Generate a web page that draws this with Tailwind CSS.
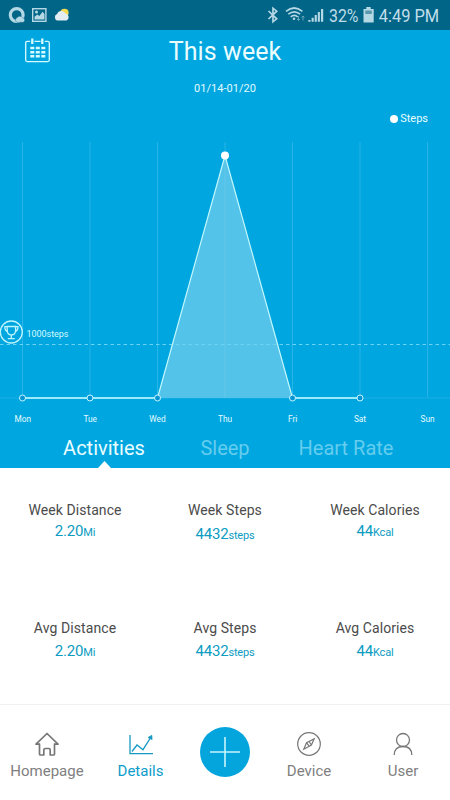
<!DOCTYPE html>
<html lang="en">
<head>
<meta charset="utf-8">
<meta name="viewport" content="width=device-width, initial-scale=1">
<title>This week</title>
<script src="https://cdn.jsdelivr.net/npm/@tailwindcss/browser@4"></script>
</head>
<body class="w-[450px] h-[800px] overflow-hidden bg-white font-['Roboto',sans-serif] flex flex-col">
<!-- Status bar -->
<div class="h-[30px] shrink-0 bg-[#006587]">
<svg class="block" width="450" height="30" viewBox="0 0 450 30" fill="none">
  <circle cx="16.700" cy="15" r="6.400" stroke="#b5d8e5" stroke-width="3.200"/>
  <path d="M17 22.300a2.500 2.500 0 0 1 .3-4.700 3.300 3.300 0 0 1 5.400.1 2.400 2.400 0 0 1 .5 4.600z" fill="#b5d8e5" stroke="#006587" stroke-width=".4"/>
  <rect x="32.700" y="8.700" width="13.200" height="12.600" stroke="#b5d8e5" stroke-width="1.400"/>
  <path d="M34.500 19.500v-2.700l2.800-2.400 2.100 1.500 3.100-4.200 2 2.400v5.400z" fill="#b5d8e5"/><circle cx="36.500" cy="12" r="1.500" fill="#b5d8e5"/>
  <circle cx="64.500" cy="12.800" r="4.100" fill="#f6dc54"/>
  <path d="M57.500 20.500a3.400 3.400 0 0 1-.4-6.500 4.600 4.600 0 0 1 8.500-.5 3.700 3.700 0 0 1 .9 7z" fill="#e4edf1"/>
  <path d="M268.500 11l8.200 7.800-3.700 3V8.200l3.700 3-8.200 7.800" stroke="#b5d8e5" stroke-width="1.700"/>
  <g stroke="#b5d8e5" stroke-width="1.700"><path d="M286 11.300q8.200-6.600 16.400 0M288.300 14.100q5.900-4.600 11.800 0M290.700 16.800q3.500-2.700 7 0"/></g>
  <circle cx="294" cy="18.800" r="1.300" fill="#b5d8e5"/>
  <path d="M298.500 16v4.500m-1.500-1.500 1.500 1.500 1.500-1.500M303 20.500V16m-1.500 1.500L303 16l1.500 1.500" stroke="#69a5b9"/>
  <path d="M308.300 21.800v-1.700h2.200v1.700zM311.600 21.800v-4h2.100v4zM314.700 21.800v-6.700h2.100v6.700zM317.800 21.800V12h2.100v9.800zM321 21.800V9h2.200v12.800z" fill="#b5d8e5"/>
  <text x="329" y="22.300" font-size="19" fill="#c0deea" textLength="29.500" lengthAdjust="spacingAndGlyphs">32%</text>
  <path d="M366.300 7h4.400v2h3v13.500h-10.200V9h2.800z" fill="#b5d8e5"/><path d="M365.300 10.500h6.500v3.500h-6.500z" fill="#5997ad"/>
  <text x="378.700" y="22.300" font-size="19" fill="#c0deea" textLength="60.500" lengthAdjust="spacingAndGlyphs">4:49 PM</text>
</svg>
</div>
<!-- Summary and chart -->
<section class="h-[438px] shrink-0 bg-[#00a6e0] text-white flex flex-col">
  <div class="h-[42px] flex items-center justify-between px-[25px]">
    <svg width="25" height="26" viewBox="0 0 25 26" fill="none" stroke="#d8fbff" stroke-width="1.300">
      <path d="M5.200 3.300H2.200Q.7 3.300 .7 4.800v17.300q0 1.500 1.500 1.500h20.600q1.500 0 1.500-1.500V4.800Q24.300 3.300 22.800 3.300h-3M9.500 3.300h6"/>
      <path d="M7.300 .5v5.500M17.300 .5v5.500" stroke-width="2.300"/>
      <g stroke-width="2.500" stroke-dasharray="4 1.500"><path d="M5.300 10h15M5.300 14.200h15M5.300 18.300h15"/></g>
    </svg>
    <h1 class="text-[25px] leading-[42px] pt-[2px] text-[#e9fdff] tracking-[.1px]">This week</h1>
    <span class="w-[25px]"></span>
  </div>
  <div class="h-[32px] pt-[8px] text-center text-[11px] leading-[17px] tracking-[.03px] text-[#e2fbff]">01/14-01/20</div>
  <div class="h-[28px] pt-[2px] pr-[22px] flex items-center justify-end gap-[2px] text-[11px] text-[#e9fdff]"><i class="w-[8px] h-[8px] rounded-full bg-white"></i>Steps</div>
  <svg class="block shrink-0" width="450" height="298" viewBox="0 132 450 298" fill="none">
    <path d="M22.500 142v256M90 142v256M157.500 142v256M292.500 142v256M360 142v256M427.500 142v256M225 142v256" stroke="#28b4e6"/>
    <path d="M0 398h450" stroke="#1bafe3"/>
    <path d="M157.500 398L225 155.500 292.500 398z" fill="#54c3e9"/>
    <path d="M225 160v238" stroke="#62c8ea"/>
    <path d="M0 344.500h450" stroke="#6dd3f2" stroke-dasharray="3.500 3"/>
    <path d="M22.500 398h135M292.500 398H360" stroke="#9ceafa" stroke-width="1.800"/>
    <path d="M157.500 398L225 155.500 292.500 398" stroke="#c2f7fc" stroke-width="1.200"/>
    <g fill="#0794d5" stroke="#c7f6ff" stroke-width="1"><circle cx="22.500" cy="398" r="3"/><circle cx="90" cy="398" r="3"/><circle cx="157.500" cy="398" r="3"/><circle cx="292.500" cy="398" r="3"/><circle cx="360" cy="398" r="3"/></g>
    <circle cx="225" cy="155.500" r="4" fill="#fff"/>
    <g stroke="#bff5ff" stroke-width="1.300"><circle cx="11.300" cy="332" r="11"/><path d="M7.200 326.500h8.400v3.500q0 5-4.200 5T7.200 330zM7.200 326.700H4.800q.1 4.500 3.200 5M15.600 326.700h2.400q-.1 4.500-3.200 5M11.300 335v3.400M7.800 338.700h7"/></g>
    <text x="26.500" y="337" font-size="9" fill="#d5faff" textLength="42">1000steps</text>
    <g font-size="8.300" fill="#e6fcff" text-anchor="middle"><text x="22.700" y="421.700">Mon</text><text x="90.200" y="421.700">Tue</text><text x="157.500" y="421.700">Wed</text><text x="225" y="421.700">Thu</text><text x="292.700" y="421.700">Fri</text><text x="360" y="421.700">Sat</text><text x="427.500" y="421.700">Sun</text></g>
  </svg>
  <nav class="h-[38px] grid grid-cols-[121px_121px_121px] justify-center text-center text-[20px] leading-[37px]">
    <div class="relative text-[#e9fdff]">Activities<svg class="absolute left-[54px] bottom-0" width="13" height="8"><path d="M0 8L6.500 1 13 8z" fill="#fff"/></svg></div>
    <div class="text-[#65cdee]">Sleep</div>
    <div class="text-[#65cdee]">Heart Rate</div>
  </nav>
</section>
<!-- Totals and averages -->
<section class="h-[236px] shrink-0 grid grid-cols-3 grid-rows-2 text-center text-[14px] text-[#4b4b4b]">
  <div class="pt-[32px]"><p class="leading-[20px] tracking-[.08px]">Week Distance</p><p class="text-[#0c9cc2] text-[15px] leading-[22px] tracking-[-.2px]">2.20<span class="text-[11px]">Mi</span></p></div>
  <div class="pt-[32px]"><p class="leading-[20px] tracking-[.08px]">Week Steps</p><p class="text-[#0c9cc2] text-[15px] leading-[22px] tracking-[-.2px] pt-[3px]">4432<span class="text-[11px]">steps</span></p></div>
  <div class="pt-[32px]"><p class="leading-[20px] tracking-[.08px]">Week Calories</p><p class="text-[#0c9cc2] text-[15px] leading-[22px] tracking-[-.2px]">44<span class="text-[11px]">Kcal</span></p></div>
  <div class="pt-[32px]"><p class="leading-[20px] tracking-[.08px]">Avg Distance</p><p class="text-[#0c9cc2] text-[15px] leading-[22px] tracking-[-.2px] pt-[2px]">2.20<span class="text-[11px]">Mi</span></p></div>
  <div class="pt-[32px]"><p class="leading-[20px] tracking-[.08px]">Avg Steps</p><p class="text-[#0c9cc2] text-[15px] leading-[22px] tracking-[-.2px] pt-[2px]">4432<span class="text-[11px]">steps</span></p></div>
  <div class="pt-[32px]"><p class="leading-[20px] tracking-[.08px]">Avg Calories</p><p class="text-[#0c9cc2] text-[15px] leading-[22px] tracking-[-.2px] pt-[2px]">44<span class="text-[11px]">Kcal</span></p></div>
</section>
<!-- Bottom navigation -->
<nav class="h-[96px] shrink-0 border-t border-[#f0f0f0] grid grid-cols-[94px_93px_75px_94px_94px] text-[15px] text-[#808080] leading-[20px]">
  <div class="pt-[26px] flex flex-col items-center">
    <svg width="26" height="26" viewBox="0 0 26 26" fill="none" stroke="#777" stroke-width="1.700" stroke-linejoin="round" stroke-linecap="round"><path d="M2 13.200L13 2.500l11 10.700M5.500 13.200v9.800q0 1 1 1h3.300v-5q0-1.500 1.500-1.500h3.400q1.500 0 1.500 1.500v5h3.300q1 0 1-1v-9.800M5.300 13.200H2M20.700 13.200H24"/></svg>
    <span class="mt-[4px]">Homepage</span></div>
  <div class="pt-[26px] flex flex-col items-center text-[#0e9ccb]">
    <svg width="26" height="26" viewBox="0 0 26 26" fill="none" stroke="#1599c2" stroke-width="1.300"><path d="M2 4v18.700h23M4 20.500l5-6.500 6 4.700L23 6"/><path d="M20 6.500l3.800-2.200.3 4.300z" fill="#1599c2" stroke-width=".7"/></svg>
    <span class="mt-[4px]">Details</span></div>
  <div class="pt-[22px] flex justify-center">
    <svg class="shrink-0" width="50" height="50" viewBox="0 0 50 50"><circle cx="25" cy="25" r="25" fill="#04a4dc"/><path d="M25 10v30M10 25h30" stroke="#c6f5ff" stroke-width="1.600"/></svg></div>
  <div class="pt-[26px] flex flex-col items-center">
    <svg width="26" height="26" viewBox="0 0 26 26" fill="none" stroke="#777" stroke-width="1.200"><circle cx="13" cy="13" r="11.300"/><path d="M18.200 7.800l-2.800 6.200-7.600 4.200 2.700-6.500zM10.500 11.700l2.600 3.500M13 10.500l2.400 3.500"/></svg>
    <span class="mt-[4px]">Device</span></div>
  <div class="pt-[26px] flex flex-col items-center">
    <svg width="26" height="26" viewBox="0 0 26 26" fill="none" stroke="#777" stroke-width="1.300"><circle cx="13" cy="9" r="6.500"/><path d="M4.200 24q0-8.500 8.800-8.500t8.800 8.500"/></svg>
    <span class="mt-[4px]">User</span></div>
</nav>
</body>
</html>
